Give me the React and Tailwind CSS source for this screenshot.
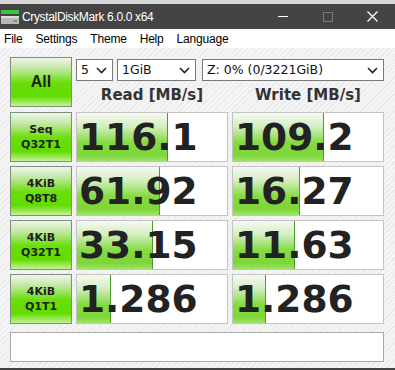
import React from "react";

const rows = [
  { a: "Seq", b: "Q32T1", read: "116.1", rw: 91, write: "109.2", ww: 91 },
  { a: "4KiB", b: "Q8T8", read: "61.92", rw: 83, write: "16.27", ww: 67 },
  { a: "4KiB", b: "Q32T1", read: "33.15", rw: 76, write: "11.63", ww: 62 },
  { a: "4KiB", b: "Q1T1", read: "1.286", rw: 34, write: "1.286", ww: 33 },
];

const greenBtn =
  "border border-[#7d8f7d] bg-[linear-gradient(to_bottom,#eef5ec_0%,#c2e8a4_22%,#6ade0a_52%,#62dc00_80%,#c4f298_100%)] text-[#1e1e1e] font-bold";

function Chevron() {
  return (
    <svg width="11" height="7" viewBox="0 0 11 7" className="shrink-0">
      <path d="M1 1 L5.5 5.5 L10 1" fill="none" stroke="#222" strokeWidth="1.6" />
    </svg>
  );
}

function Select({ text, className = "" }) {
  return (
    <div
      className={`h-[22px] flex items-center justify-between bg-white border border-[#7a7a7a] pl-[4px] pr-[5px] text-[12.5px] text-[#111] ${className}`}
      style={{ fontFamily: "'DejaVu Sans', sans-serif" }}
    >
      <span>{text}</span>
      <Chevron />
    </div>
  );
}

function Result({ value, width }) {
  return (
    <div className="relative h-[50px] w-[152px] bg-white border border-[#c4c4c4] overflow-hidden">
      <div
        className="absolute left-0 top-0 bottom-0 border-r border-[#4f9a30] bg-[linear-gradient(to_bottom,#f6f8f4_0%,#d4eec0_28%,#84da40_62%,#7ed63a_88%,#9ee466_100%)]"
        style={{ width: `${width}px` }}
      />
      <div
        className="relative h-full flex items-center pl-[2px] pt-[1px] text-[37.5px] font-bold leading-none text-[#222]"
        style={{ fontFamily: "'DejaVu Sans', sans-serif" }}
      >
        {value}
      </div>
    </div>
  );
}

function DriveIcon() {
  return (
    <svg width="20" height="18" viewBox="0 0 20 18">
      <rect x="1" y="2" width="18" height="4" fill="#3cc43c" />
      <rect x="1" y="8" width="18" height="8" fill="#b8b8b8" />
      <rect x="1" y="8" width="18" height="2" fill="#dcdcdc" />
      <rect x="13" y="12" width="4" height="2" fill="#3cc43c" />
    </svg>
  );
}

export default function App() {
  return (
    <div
      className="w-[395px] h-[370px] flex flex-col bg-[#444] overflow-hidden"
      style={{ fontFamily: "'Liberation Sans', Arial, sans-serif" }}
    >
      <div className="h-[4px] bg-[#d6d6d6] shrink-0" />
      {/* title bar */}
      <div className="h-[25px] shrink-0 bg-[#444444] flex items-center text-white">
        <div className="w-[22px] flex items-center">
          <DriveIcon />
        </div>
        <span className="text-[12px] tracking-[-0.35px]">CrystalDiskMark 6.0.0 x64</span>
        <div className="ml-auto flex items-center">
          <div className="w-[45px] flex justify-center">
            <div className="w-[10px] h-[1px] bg-white" />
          </div>
          <div className="w-[45px] flex justify-center">
            <div className="w-[10px] h-[10px] border border-[#7a7a7a]" />
          </div>
          <div className="w-[45px] flex justify-center">
            <svg width="11" height="11" viewBox="0 0 11 11">
              <path d="M0.5 0.5 L10.5 10.5 M10.5 0.5 L0.5 10.5" stroke="#fff" strokeWidth="1.3" />
            </svg>
          </div>
        </div>
      </div>
      {/* menu */}
      <div className="h-[19px] shrink-0 bg-white flex items-center gap-[13px] pl-[4px] text-[12px] tracking-[-0.2px] text-black">
        <span>File</span>
        <span>Settings</span>
        <span>Theme</span>
        <span>Help</span>
        <span>Language</span>
      </div>
      {/* body */}
      <div className="flex-1 bg-[repeating-linear-gradient(135deg,#f4f4f4_0px,#f4f4f4_3px,#e9e9e9_3px,#e9e9e9_4px)] pl-[10px] pt-[9px]">
        <div className="flex gap-[4px]">
          <div
            className={`w-[62px] h-[50px] flex items-center justify-center text-[16px] ${greenBtn}`}
            style={{ fontFamily: "'Liberation Sans', sans-serif" }}
          >
            All
          </div>
          <div className="flex flex-col">
            <div className="flex mt-[2px]">
              <Select text="5" className="w-[37px]" />
              <Select text="1GiB" className="w-[79px] ml-[4px]" />
              <Select text="Z: 0% (0/3221GiB)" className="w-[182px] ml-[6px]" />
            </div>
            <div
              className="flex gap-[4px] mt-[7px] text-[15px] font-bold text-[#333] leading-none"
              style={{ fontFamily: "'DejaVu Sans', sans-serif" }}
            >
              <div className="w-[152px] text-center">Read [MB/s]</div>
              <div className="w-[152px] text-center">Write [MB/s]</div>
            </div>
          </div>
        </div>
        <div className="flex flex-col gap-[4px] mt-[5px]">
          {rows.map((r, i) => (
            <div key={i} className="flex gap-[4px]">
              <div
                className={`w-[62px] h-[50px] flex flex-col items-center justify-center text-[11px] leading-[15px] ${greenBtn}`}
                style={{ fontFamily: "'DejaVu Sans', sans-serif" }}
              >
                <span>{r.a}</span>
                <span>{r.b}</span>
              </div>
              <Result value={r.read} width={r.rw} />
              <Result value={r.write} width={r.ww} />
            </div>
          ))}
        </div>
        <div className="mt-[8px] w-[374px] h-[30px] bg-white border border-[#a8a8a8]" />
      </div>
      <div className="h-[2px] shrink-0 bg-[#444]" />
    </div>
  );
}
